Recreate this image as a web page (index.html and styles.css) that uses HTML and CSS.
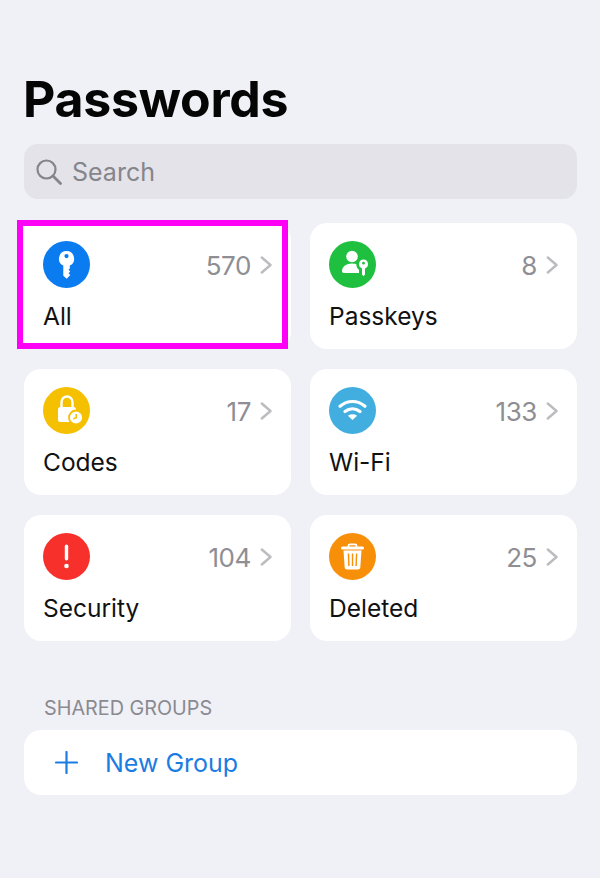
FILE: index.html
```html
<!DOCTYPE html>
<html lang="en">
<head>
<meta charset="utf-8">
<title>Passwords</title>
<link rel="stylesheet" href="styles.css">
</head>
<body>
<main class="page">
  <h1 class="title">Passwords</h1>
  <div class="search">
    <svg class="search-icon" viewBox="0 0 26 26" width="26" height="26" aria-hidden="true"><circle cx="10.5" cy="10.5" r="9" fill="none" stroke="#85858b" stroke-width="2.2"/><path d="M17 17l7.5 7.5" fill="none" stroke="#85858b" stroke-width="2.8" stroke-linecap="round"/></svg>
    <span class="search-text">Search</span>
  </div>
  <div class="grid">
    <a class="card card-selected">
      <div class="card-top">
        <span class="badge badge-blue"><svg viewBox="0 0 47 47" width="47" height="47"><path fill="#fff" fill-rule="evenodd" d="M23.500 10a7.700 7.700 0 0 1 3.300 14.600v2.900l-1.300 1.300 1.800 1.700-1.800 1.700 1.800 1.700-3.600 3.800-3.400-3V24.600A7.700 7.700 0 0 1 23.500 10zm0 3a2.100 2.100 0 1 0 0 4.200 2.100 2.100 0 0 0 0-4.200z"/></svg></span>
        <span class="count">570</span>
        <svg class="chev" viewBox="0 0 12 18" width="12" height="18"><path d="M1.800 1.500l8.700 7.500-8.700 7.500" fill="none" stroke="#bcbcc0" stroke-width="2.400" stroke-linecap="round" stroke-linejoin="round"/></svg>
      </div>
      <div class="label">All</div>
    </a>
    <a class="card">
      <div class="card-top">
        <span class="badge badge-green"><svg viewBox="0 0 47 47" width="47" height="47"><circle cx="23" cy="15.500" r="5.800" fill="#fff"/><path fill="#fff" d="M13 30c0-4.500 4.500-7.500 10-7.500 1.500 0 3 .2 4.300.6-.1 2.400 1 4.500 2.700 5.700V32H15c-1.300 0-2-.7-2-2z"/><path fill="#fff" fill-rule="evenodd" d="M34.500 18.500a4.600 4.600 0 0 1 1.500 8.900v6.100l-1.500 1.700-1.500-1.700v-6.100a4.600 4.600 0 0 1 1.500-8.900zm0 2.300a1.400 1.400 0 1 0 0 2.800 1.400 1.400 0 0 0 0-2.800z"/></svg></span>
        <span class="count">8</span>
        <svg class="chev" viewBox="0 0 12 18" width="12" height="18"><path d="M1.800 1.500l8.700 7.500-8.700 7.500" fill="none" stroke="#bcbcc0" stroke-width="2.400" stroke-linecap="round" stroke-linejoin="round"/></svg>
      </div>
      <div class="label">Passkeys</div>
    </a>
    <a class="card">
      <div class="card-top">
        <span class="badge badge-yellow"><svg viewBox="0 0 47 47" width="47" height="47"><path fill="none" stroke="#fff" stroke-width="2.400" d="M18.500 21v-6a5.500 5.500 0 0 1 11 0v6"/><rect x="15" y="20" width="18" height="15" rx="2.500" fill="#fff"/><circle cx="33" cy="30.500" r="7" fill="#fff" stroke="#f4c000" stroke-width="1.800"/><path d="M33.200 27v3.800l-2.800 1" fill="none" stroke="#f4c000" stroke-width="1.500"/></svg></span>
        <span class="count">17</span>
        <svg class="chev" viewBox="0 0 12 18" width="12" height="18"><path d="M1.800 1.500l8.700 7.500-8.700 7.500" fill="none" stroke="#bcbcc0" stroke-width="2.400" stroke-linecap="round" stroke-linejoin="round"/></svg>
      </div>
      <div class="label">Codes</div>
    </a>
    <a class="card">
      <div class="card-top">
        <span class="badge badge-sky"><svg viewBox="0 0 47 47" width="47" height="47"><g fill="none" stroke="#fff" stroke-width="3.200" stroke-linecap="round"><path d="M11 19.300c7.500-6.400 17.500-6.400 25 0"/><path d="M16 24.600c4.600-3.700 10.400-3.700 15 0"/></g><path fill="#fff" d="M23.500 33l-4.600-4.300c2.900-1.800 6.300-1.800 9.200 0z"/></svg></span>
        <span class="count">133</span>
        <svg class="chev" viewBox="0 0 12 18" width="12" height="18"><path d="M1.800 1.500l8.700 7.500-8.700 7.500" fill="none" stroke="#bcbcc0" stroke-width="2.400" stroke-linecap="round" stroke-linejoin="round"/></svg>
      </div>
      <div class="label">Wi-Fi</div>
    </a>
    <a class="card">
      <div class="card-top">
        <span class="badge badge-red"><svg viewBox="0 0 47 47" width="47" height="47"><rect x="21.800" y="11.500" width="3.400" height="16" rx="1.700" fill="#fff"/><circle cx="23.500" cy="33" r="2.300" fill="#fff"/></svg></span>
        <span class="count">104</span>
        <svg class="chev" viewBox="0 0 12 18" width="12" height="18"><path d="M1.800 1.500l8.700 7.500-8.700 7.500" fill="none" stroke="#bcbcc0" stroke-width="2.400" stroke-linecap="round" stroke-linejoin="round"/></svg>
      </div>
      <div class="label">Security</div>
    </a>
    <a class="card">
      <div class="card-top">
        <span class="badge badge-orange"><svg viewBox="0 0 47 47" width="47" height="47"><path fill="none" stroke="#fff" stroke-width="1.800" d="M19.500 14v-1.200c0-1 .6-1.500 1.500-1.500h5c.9 0 1.500.5 1.500 1.500V14"/><rect x="12" y="13.500" width="23" height="3" rx="1.500" fill="#fff"/><path fill="#fff" fill-rule="evenodd" d="M14.500 17.500h18l-1.200 17c-.1 1.300-1 2-2.200 2H17.900c-1.200 0-2.100-.7-2.200-2zM18.700 20.500l.5 12.500h1.400l-.4-12.500zM22.800 20.500V33h1.400V20.500zM26.900 20.500L26.400 33h1.400l.5-12.500z"/></svg></span>
        <span class="count">25</span>
        <svg class="chev" viewBox="0 0 12 18" width="12" height="18"><path d="M1.800 1.500l8.700 7.500-8.700 7.500" fill="none" stroke="#bcbcc0" stroke-width="2.400" stroke-linecap="round" stroke-linejoin="round"/></svg>
      </div>
      <div class="label">Deleted</div>
    </a>
  </div>
  <h2 class="section-title">SHARED GROUPS</h2>
  <a class="new-group">
    <svg class="plus" viewBox="0 0 23 23" width="23" height="23"><path d="M11.500 1v21M1 11.500h21" stroke="#1b7ce2" stroke-width="2.200" stroke-linecap="round" fill="none"/></svg>
    <span class="new-group-text">New Group</span>
  </a>
</main>
</body>
</html>
```
FILE: styles.css
```css
*, *::before, *::after { box-sizing: border-box; }
html, body { margin: 0; padding: 0; }
body {
  width: 600px;
  height: 878px;
  overflow: hidden;
  background: #f0f0f7;
  font-family: Inter, "Liberation Sans", sans-serif;
  color: #111;
}
.page { padding: 70px 23px 0 24px; }
.title {
  margin: 0 0 0 -1px;
  height: 58px;
  font-size: 50px;
  line-height: 58px;
  font-weight: 700;
  letter-spacing: -0.3px;
  color: #050505;
}
.search {
  margin-top: 16px;
  height: 55px;
  border-radius: 14px;
  background: #e3e3e9;
  display: flex;
  align-items: center;
  padding-left: 12px;
  gap: 10px;
}
.search-icon { flex: none; }
.search-text { font-size: 25px; padding-top: 1px; color: #85858b; }
.grid {
  margin-top: 24px;
  display: grid;
  grid-template-columns: 267px 267px;
  column-gap: 19px;
  row-gap: 20px;
}
.card {
  position: relative;
  display: block;
  height: 126px;
  background: #fff;
  border-radius: 17px;
  padding: 18px 19px 0;
}
.card-selected { border-radius: 0 17px 17px 0; }
.card-selected::after {
  content: "";
  position: absolute;
  left: -7px;
  top: -3px;
  width: 271px;
  height: 129px;
  border: 6px solid #ff00f6;
}
.card-top { display: flex; align-items: center; height: 47px; }
.badge {
  flex: none;
  width: 47px;
  height: 47px;
  border-radius: 50%;
  margin-right: auto;
  display: block;
}
.badge svg { display: block; }
.badge-blue { background: #0b7bf0; }
.badge-green { background: #1fc03f; }
.badge-yellow { background: #f4c000; }
.badge-sky { background: #42aee0; }
.badge-red { background: #f7302b; }
.badge-orange { background: #f88f08; }
.count { font-size: 26px; line-height: 47px; padding-top: 1px; letter-spacing: -0.4px; color: #8e8e93; }
.chev { flex: none; margin: 1px 0 0 9px; }
.label { margin: 13px 0 0; font-size: 24.500px; line-height: 30px; color: #111; }
.section-title {
  margin: 55px 0 0 20px;
  font-size: 19.800px;
  line-height: 24px;
  font-weight: 400;
  color: #8a8a8f;
}
.new-group {
  display: flex;
  align-items: center;
  margin-top: 10px;
  height: 65px;
  background: #fff;
  border-radius: 17px;
  padding-left: 31px;
}
.plus { flex: none; }
.new-group-text { margin-left: 27px; font-size: 25px; color: #1b7ce2; }
```
